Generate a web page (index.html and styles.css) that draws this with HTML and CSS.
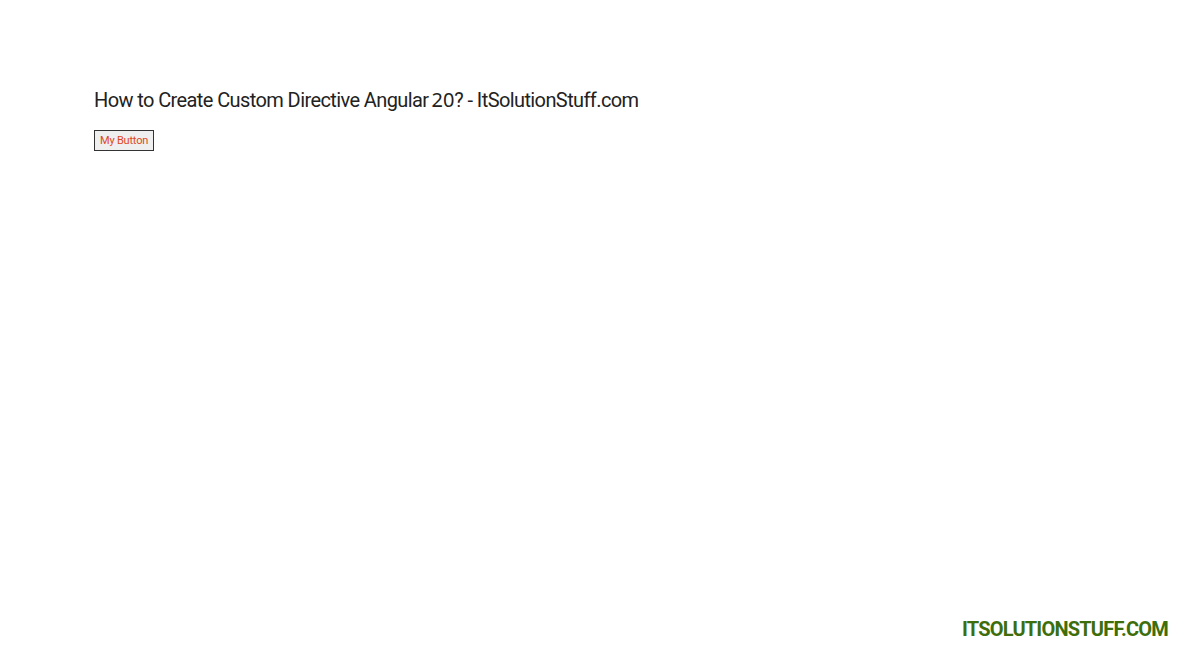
FILE: index.html
```html
<!DOCTYPE html>
<html lang="en">
<head>
    <meta charset="UTF-8">
    <meta name="viewport" content="width=device-width, initial-scale=1.0">
    <title>Custom Directive Angular 20</title>
    <link rel="stylesheet" href="styles.css">
</head>
<body>
    <main class="container">
        <h1 class="title">How to Create Custom Directive Angular<span class="num">20</span>? - ItSolutionStuff.com</h1>
        <button type="button" class="my-btn">My Button</button>
    </main>

    <footer class="brand">ITSOLUTIONSTUFF.COM</footer>
</body>
</html>
```

FILE: styles.css
```css
*,
*::before,
*::after {
box-sizing: border-box;
}

body {
font-family: Roboto, "Liberation Sans", sans-serif;
background-color: #ffffff;
margin: 0;
height: 100vh;
display: flex;
flex-direction: column;
}

.container {
flex: 1;
padding: 88px 0 0 94px;
}

.title {
font-size: 20px;
font-weight: 400;
color: #222222;
margin: 0 0 17px;
line-height: 24px;
letter-spacing: -0.6px;
}

.title .num {
font-family: "Noto Sans", sans-serif;
margin-left: 3px;
letter-spacing: 0;
}

.my-btn {
font-family: Roboto, sans-serif;
font-size: 11px;
color: #e0461c;
background-color: #efefef;
border: 1px solid #333333;
padding: 3px 5px;
line-height: 13px;
letter-spacing: -0.2px;
cursor: pointer;
}

.brand {
align-self: flex-end;
padding: 0 32px 9px 0;
font-size: 20px;
font-weight: 700;
color: #3d6e0b;
line-height: 24px;
letter-spacing: -0.8px;
}
```
